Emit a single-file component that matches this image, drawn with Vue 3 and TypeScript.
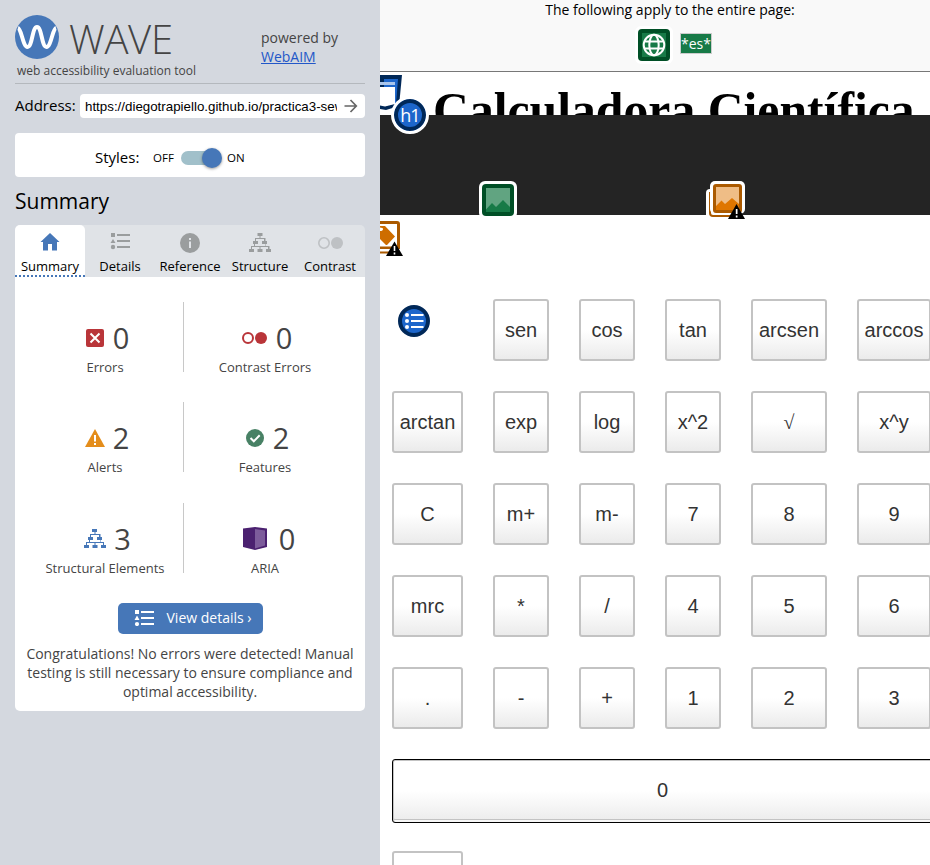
<script setup lang="ts">
interface Tab { id: string; label: string }
interface Stat { id: string; label: string; count: number }

const tabs: Tab[] = [
  { id: 'home', label: 'Summary' },
  { id: 'list', label: 'Details' },
  { id: 'info', label: 'Reference' },
  { id: 'tree', label: 'Structure' },
  { id: 'contrast', label: 'Contrast' },
]

const stats: Stat[] = [
  { id: 'error', label: 'Errors', count: 0 },
  { id: 'contrast', label: 'Contrast Errors', count: 0 },
  { id: 'alert', label: 'Alerts', count: 2 },
  { id: 'feature', label: 'Features', count: 2 },
  { id: 'tree', label: 'Structural Elements', count: 3 },
  { id: 'aria', label: 'ARIA', count: 0 },
]

const keys: string[] = [
  '', 'sen', 'cos', 'tan', 'arcsen', 'arccos',
  'arctan', 'exp', 'log', 'x^2', '√', 'x^y',
  'C', 'm+', 'm-', '7', '8', '9',
  'mrc', '*', '/', '4', '5', '6',
  '.', '-', '+', '1', '2', '3',
]
</script>

<template>
  <div class="app">
    <aside class="sidebar">
      <header class="brand">
        <div class="logo">
          <div class="logo-row">
            <svg class="mark" viewBox="0 0 44 44">
              <circle cx="22" cy="22" r="22" fill="#4677b8" />
              <path d="M3 13C6.500 14 8 32 12.500 32C17.500 32 17 12 22 12C27 12 26.500 32 31.500 32C36 32 37.500 14 41 13" fill="none" stroke="#fff" stroke-width="4" />
            </svg>
            <span class="wordmark">WAVE</span>
          </div>
          <p class="tagline">web accessibility evaluation tool</p>
        </div>
        <div class="powered">powered by<br /><a>WebAIM</a></div>
      </header>

      <div class="address">
        <label>Address:</label>
        <div class="field">
          <span class="url">https://diegotrapiello.github.io/practica3-sew/</span>
          <svg width="28" height="24" viewBox="0 0 28 24"><path d="M7.500 12H19M13.500 6L19.300 12L13.500 18" fill="none" stroke="#666" stroke-width="1.700" /></svg>
        </div>
      </div>

      <div class="styles">
        <span class="styles-label">Styles:</span>
        <span class="off">OFF</span>
        <span class="switch"><span class="knob"></span></span>
        <span class="on">ON</span>
      </div>

      <h2>Summary</h2>

      <nav class="tabs">
        <div v-for="(t, i) in tabs" :key="t.id" class="tab" :class="{ active: i === 0 }">
          <svg v-if="t.id === 'home'" width="20" height="20" viewBox="0 0 20 20"><path d="M10 1L0.500 10H3V18.500H8V12H12V18.500H17V10H19.500Z" fill="#4677b8" /></svg>
          <svg v-else-if="t.id === 'list'" width="20" height="20" viewBox="0 0 20 20" fill="#9a9d9e"><path d="M1 1H5V5H1ZM7 2H20V4H7ZM3 7L5.500 11H0.500ZM7 8H20V10H7ZM7 14H20V16H7Z" /><circle cx="3" cy="15" r="2.200" /></svg>
          <svg v-else-if="t.id === 'info'" class="info" width="20" height="20" viewBox="0 0 20 20"><circle cx="10" cy="11" r="10" fill="#9a9d9e" /><path d="M9 6H11V8H9ZM9 9.500H11V16H9Z" fill="#e0e3e7" /></svg>
          <svg v-else-if="t.id === 'tree'" width="22" height="20" viewBox="0 0 22 20" fill="#9a9d9e"><path d="M8.500 1H13.500V4H11.500V6H16.500V9H18V12H16.500V14H20.500V17H22V20H17V17H19V15H16V12H13V9H15V7H7V9H9V12H6V14H11.500H16V15H11.500V17H13.500V20H8.500V17H10.500V15H3V17H5V20H0V17H2V14H5V12H4V9H6V6H10.500V4H8.500Z" /></svg>
          <svg v-else width="26" height="20" viewBox="0 0 26 20"><circle cx="7" cy="11" r="5.200" fill="none" stroke="#bec1c4" stroke-width="1.600" /><circle cx="20" cy="11" r="6" fill="#bec1c4" /></svg>
          <span>{{ t.label }}</span>
        </div>
      </nav>

      <section class="panel">
        <div class="stats">
          <div v-for="s in stats" :key="s.id" class="stat">
            <div class="figure" :class="s.id">
              <svg v-if="s.id === 'error'" width="20" height="20" viewBox="0 0 20 20"><rect x="1" y="1" width="18" height="18" rx="2" fill="#b93539" /><path d="M5.500 5.500L14.500 14.500M14.500 5.500L5.500 14.500" stroke="#fff" stroke-width="2" /></svg>
              <svg v-else-if="s.id === 'contrast'" width="26" height="20" viewBox="0 0 26 20"><circle cx="6" cy="10" r="5" fill="none" stroke="#b93539" stroke-width="2" /><circle cx="19" cy="10" r="6" fill="#b93539" /></svg>
              <svg v-else-if="s.id === 'alert'" width="20" height="20" viewBox="0 0 20 20"><path d="M10 1L20 19H0Z" fill="#e48d1b" /><path d="M9 7H11V13.500H9ZM9 15H11V17H9Z" fill="#fff" /></svg>
              <svg v-else-if="s.id === 'feature'" width="20" height="20" viewBox="0 0 20 20"><circle cx="10" cy="10" r="9" fill="#488165" /><path d="M5.500 10L8.800 13.300L14.700 7.300" fill="none" stroke="#fff" stroke-width="2" /></svg>
              <svg v-else-if="s.id === 'tree'" width="22" height="20" viewBox="0 0 22 20" fill="#4677b8"><path d="M8 0H13V3H11.500V5H16.500V8H18V11H16.500V13H20V16H22V19H17V16H19V14H16V11H13V8H15V6H7V8H9V11H6V13H16V14H11.500V16H13.500V19H8.500V16H10.500V14H3V16H5V19H0V16H2V13H5V11H4V8H6V5H10.500V3H8Z" /></svg>
              <svg v-else width="26" height="24" viewBox="0 0 26 24"><path d="M1 1.500L13 0L25 1.500V20L13 23L1 20Z" fill="#4b2170" /><path d="M13 2L23 3.500V18.500L13 21.500Z" fill="#7d5c9b" /></svg>
              <span class="count">{{ s.count }}</span>
            </div>
            <div class="stat-label">{{ s.label }}</div>
          </div>
        </div>
        <button class="details">
          <svg width="20" height="17" viewBox="0 0 20 17" fill="#fff"><path d="M1 1H5V5H1ZM7 2H20V4H7ZM3 6.500L5.500 11H0.500ZM7 8H20V10H7ZM7 14H20V16H7Z" /><circle cx="3" cy="15" r="2.100" /></svg>
          View details ›
        </button>
        <p class="message">Congratulations! No errors were detected! Manual testing is still necessary to ensure compliance and optimal accessibility.</p>
      </section>
    </aside>

    <main class="page">
      <div class="page-bar">
        <p>The following apply to the entire page:</p>
        <div class="page-icons">
          <svg class="globe" width="38" height="38" viewBox="-3 -3 38 38">
            <rect x="-3" y="-3" width="38" height="38" rx="6" fill="#fff" />
            <rect width="32" height="32" rx="4" fill="#004f26" /><rect x="4" y="4" width="24" height="24" fill="#177a47" />
            <g fill="none" stroke="#fff" stroke-width="2"><circle cx="16" cy="16" r="10.300" /><ellipse cx="16" cy="16" rx="4.700" ry="10.300" /><path d="M6.500 12.500H25.500M6.500 19.500H25.500" /></g>
          </svg>
          <span class="lang">*es*</span>
        </div>
      </div>

      <div class="title-clip"><h1>Calculadora Científica</h1></div>
      <div class="band"></div>

      <div class="keys">
        <div v-for="(k, i) in keys" :key="i" :class="[k ? 'key' : 'blank', { root: k === '√' }]">{{ k }}</div>
        <div class="key zero">0</div>
        <div class="key"></div>
      </div>

      <svg class="badge header-badge" width="24" height="40" viewBox="0 0 24 40">
        <path d="M0 0H25L22 35L0 42Z" fill="#fff" /><path d="M0 3H22L19 34L6 38L0 37Z" fill="#002858" />
        <path d="M4 7H18L16 32H4Z" fill="#1d66cb" /><path d="M0 10H15V13H0Z" fill="#a9c5eb" /><path d="M0 15H15V32L5 34.500L0 33.500Z" fill="#fff" />
      </svg>
      <div class="badge h1-badge">h1</div>
      <svg class="badge image-badge" width="38" height="38" viewBox="0 0 38 38">
        <rect width="38" height="38" rx="6" fill="#fff" /><rect x="3" y="3" width="32" height="32" rx="4" fill="#004f26" /><rect x="7" y="7" width="24" height="24" fill="#61a481" />
        <path d="M7 28.500L13 22L17 26L24 19L31 26V31H7Z" fill="#177a47" />
      </svg>
      <svg class="badge alert-badge" width="39" height="39" viewBox="0 0 39 39">
        <rect y="8" width="32" height="30" rx="4" fill="#fff" /><path d="M4 11V32Q4 35 7 35H28" fill="none" stroke="#ab5a00" stroke-width="2" />
        <rect x="4" width="35" height="33" rx="5" fill="#fff" /><rect x="7" y="3" width="29" height="29" rx="3" fill="#ab5a00" /><rect x="10" y="6" width="23" height="23" fill="#efbd86" />
        <path d="M10 25L15.500 19.500L19 23L26 17L33 23V29H10Z" fill="#df7600" />
        <path d="M30.500 23L39 38H22Z" fill="#000" /><path d="M29.800 28H31.500V33H29.800ZM29.800 34.500H31.500V36.500H29.800Z" fill="#fff" />
      </svg>
      <svg class="badge label-badge" width="24" height="37" viewBox="0 0 24 37">
        <path d="M0 1H17Q20 1 20 4V29H0V26.500H17V4H0ZM0 31.500H10V33.500H0Z" fill="#ab5a00" />
        <path d="M0 6H5L15 16.500L7 25H6L0 19V11Q3 11 3 9Q3 7.500 0 7.500Z" fill="#ce6d00" />
        <path d="M14.500 21.500L23 36H6Z" fill="#000" /><path d="M13.700 26H15.300V31H13.700ZM13.700 32.500H15.300V34.500H13.700Z" fill="#fff" />
      </svg>
      <svg class="badge list-badge" width="32" height="32" viewBox="0 0 32 32">
        <circle cx="16" cy="16" r="14" fill="#1d66cb" stroke="#002858" stroke-width="4" />
        <g fill="#fff"><circle cx="9" cy="10" r="2" /><circle cx="9" cy="16" r="2" /><circle cx="9" cy="22" r="2" /><path d="M13 9H25.500V11H13ZM13 15H25.500V17H13ZM13 21H25.500V23H13Z" /></g>
      </svg>
    </main>
  </div>
</template>

<style>
body { overflow: hidden; background: #fff; }
</style>

<style scoped>
* { box-sizing: border-box; margin: 0; }
.app { display: flex; width: 930px; height: 865px; overflow: hidden; font-family: "Open Sans", sans-serif; color: #000; }
svg { display: block; flex: none; }

.sidebar { width: 380px; flex: none; padding: 15px; background: #d4d8df; }
.brand { display: flex; height: 69px; border-bottom: 1px solid #b4b8bd; }
.logo { width: 246px; }
.logo-row { display: flex; align-items: center; height: 44px; gap: 10px; }
.mark { width: 44px; height: 44px; }
.wordmark { font-size: 40px; font-weight: 300; line-height: 38px; letter-spacing: -0.3px; color: #444; padding-top: 3px; }
.tagline { font-size: 12px; line-height: 16px; padding: 4px 0 0 2px; color: #444; white-space: nowrap; }
.powered { padding-top: 13px; font-size: 14px; line-height: 19px; color: #444; }
.powered a { color: #2257c8; text-decoration: underline; }
.address { display: flex; align-items: center; justify-content: space-between; margin-top: 10px; height: 24px; font-size: 15px; }
.address label { padding-bottom: 2px; }
.field { display: flex; width: 285px; height: 24px; padding-left: 5px; background: #fff; border-radius: 4px; }
.url { width: 252px; overflow: hidden; white-space: nowrap; font: 13.333px/25px "Liberation Sans", sans-serif; }
.styles { display: flex; align-items: center; height: 44px; margin-top: 15px; padding: 5px 0 0 80px; background: #fff; border-radius: 4px; font-size: 11.500px; }
.styles-label { width: 58px; padding-bottom: 2px; font-size: 15px; }
.off { width: 28px; }
.switch { position: relative; width: 40px; height: 14px; border-radius: 7px; background: #a1c0ca; }
.knob { position: absolute; left: 21px; top: -3px; width: 20px; height: 20px; border-radius: 50%; background: #4677b8; box-shadow: 0 1px 3px #0006; }
.on { padding-left: 6px; }
h2 { height: 48px; padding-top: 9px; font-size: 21px; line-height: 30px; font-weight: 400; }

.tabs { display: flex; height: 52px; background: #e0e3e7; border-radius: 5px 5px 0 0; }
.tab { display: flex; flex-direction: column; align-items: center; width: 70px; height: 52px; padding-top: 7px; font-size: 13px; }
.tab svg { height: 20px; }
.tab .info { overflow: visible; }
.tab span { margin-top: 5px; line-height: 18px; }
.tab.active { background: #fff; border-bottom: 2px dotted #4677b8; border-radius: 5px 5px 0 0; }
.panel { display: flex; flex-direction: column; align-items: center; height: 434px; padding-top: 25px; background: #fff; border-radius: 0 0 5px 5px; color: #444; }
.stats { display: grid; grid-template-columns: 160px 160px; grid-template-rows: 100px 101px 100px; width: 330px; }
.stat { position: relative; height: 70px; padding-top: 16px; text-align: center; }
.stat:nth-child(odd)::after { content: ""; position: absolute; top: 0; right: 1px; width: 1px; height: 70px; background: #c8c8c8; }
.figure { display: flex; align-items: center; justify-content: center; gap: 8px; height: 40px; padding-left: 4px; }
.figure.aria { gap: 11px; padding-left: 7px; }
.figure.tree { gap: 8px; padding-left: 5px; }
.count { font-size: 29px; line-height: 40px; }
.stat-label { font-size: 13px; line-height: 18px; }
.details { display: flex; flex: none; align-items: center; width: 145px; height: 31px; gap: 13px; padding: 0 0 2px 16px; border: 0; border-radius: 5px; background: #4677b8; color: #fff; font: 14px "Open Sans", sans-serif; white-space: nowrap; }
.message { width: 340px; margin-top: 10px; font-size: 14px; line-height: 19px; text-align: center; }

.page { position: relative; width: 550px; overflow: hidden; background: #fff; }
.page-bar { height: 72px; background: #f9f9f9; border-bottom: 1px solid #777; font-size: 14px; text-align: center; }
.page-bar p { line-height: 19px; padding-left: 30px; }
.page-icons { display: flex; justify-content: center; gap: 7px; padding: 7px 0 0 37px; height: 45px; }
.lang { width: 32px; height: 21px; margin-top: 7px; border: 1px solid #ccc; background: #177a47; color: #fff; line-height: 19px; }
.title-clip { height: 43px; overflow: hidden; padding-left: 53px; }
h1 { margin-top: 10px; font: bold 49.700px/58px "Liberation Serif", serif; white-space: nowrap; }
.band { height: 100px; background: #242424; }
.keys { display: grid; grid-template-columns: 71px 56px 56px 56px 76px 74px; grid-auto-rows: 62px; gap: 30px; width: 570px; padding: 84px 0 0 12px; }
.key { display: flex; align-items: center; justify-content: center; border: 2px solid #c3c3c3; border-radius: 3px; background: linear-gradient(#fff 0%, #fff 50%, #ebebeb 100%); color: #333; font: 20px "Liberation Sans", sans-serif; }
.root { font-family: "Liberation Serif", serif; }
.zero { grid-column: 1 / -1; height: 64px; margin-right: -2px; border: 1px solid #000; border-radius: 3px 0 0 3px; background: linear-gradient(#fff 0%, #fff 50%, #ebebeb 100%); box-shadow: inset 0 1px #c3c3c3, inset 1px 0 #c3c3c3, inset 0 -2px #f7f7f7, inset 0 -3px #c3c3c3; padding-bottom: 2px; }

.badge { position: absolute; }
.header-badge { left: 0; top: 72px; }
.h1-badge { left: 11px; top: 96px; width: 38px; height: 38px; border-radius: 50%; background: #1d66cb; border: 3px solid #fff; box-shadow: inset 0 0 0 4px #002858; color: #fff; font: 18px/32px "Open Sans", sans-serif; letter-spacing: -0.8px; text-align: center; }
.image-badge { left: 99px; top: 181px; }
.alert-badge { left: 326px; top: 181px; }
.label-badge { left: 0; top: 220px; }
.list-badge { left: 18px; top: 305px; }
</style>
